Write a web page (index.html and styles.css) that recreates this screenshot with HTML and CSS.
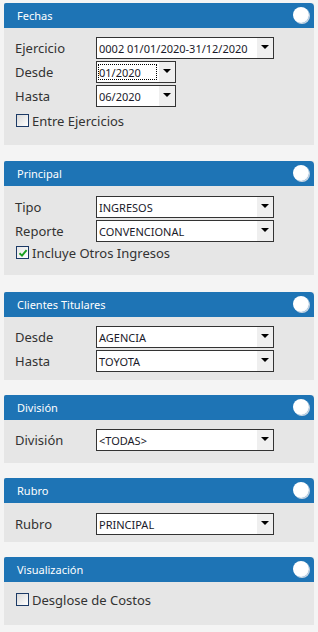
FILE: index.html
```html
<!DOCTYPE html>
<html lang="es">
<head>
<meta charset="utf-8">
<title>Reporte</title>
<link rel="stylesheet" href="styles.css">
</head>
<body>
<div class="panel">
  <div class="panel-head"><span class="title">Fechas</span><span class="knob"></span></div>
  <div class="panel-body pb18">
    <div class="row"><span class="label">Ejercicio</span><div class="select wide"><span class="value">0002 01/01/2020-31/12/2020</span><span class="arrow"></span></div></div>
    <div class="row"><span class="label">Desde</span><div class="select narrow"><span class="value focus">01/2020</span><span class="arrow"></span></div></div>
    <div class="row"><span class="label">Hasta</span><div class="select narrow"><span class="value">06/2020</span><span class="arrow"></span></div></div>
    <label class="check first-check"><span class="box"></span><span>Entre Ejercicios</span></label>
  </div>
</div>

<div class="panel">
  <div class="panel-head"><span class="title">Principal</span><span class="knob"></span></div>
  <div class="panel-body pt10 pb16">
    <div class="row"><span class="label">Tipo</span><div class="select wide"><span class="value">INGRESOS</span><span class="arrow"></span></div></div>
    <div class="row"><span class="label">Reporte</span><div class="select wide"><span class="value">CONVENCIONAL</span><span class="arrow"></span></div></div>
    <label class="check"><span class="box checked"><svg viewBox="0 0 10 10" width="10" height="10"><path d="M1.5 5.2 L4 7.6 L8.6 2.2" fill="none" stroke="#19a01e" stroke-width="1.9"/></svg></span><span>Incluye Otros Ingresos</span></label>
  </div>
</div>

<div class="panel">
  <div class="panel-head"><span class="title">Clientes Titulares</span><span class="knob"></span></div>
  <div class="panel-body">
    <div class="row"><span class="label">Desde</span><div class="select wide"><span class="value">AGENCIA</span><span class="arrow"></span></div></div>
    <div class="row"><span class="label">Hasta</span><div class="select wide"><span class="value">TOYOTA</span><span class="arrow"></span></div></div>
  </div>
</div>

<div class="panel">
  <div class="panel-head"><span class="title">División</span><span class="knob"></span></div>
  <div class="panel-body pb12">
    <div class="row"><span class="label">División</span><div class="select wide"><span class="value">&lt;TODAS&gt;</span><span class="arrow"></span></div></div>
  </div>
</div>

<div class="panel">
  <div class="panel-head"><span class="title">Rubro</span><span class="knob"></span></div>
  <div class="panel-body pt10 pb7">
    <div class="row"><span class="label">Rubro</span><div class="select wide"><span class="value">PRINCIPAL</span><span class="arrow"></span></div></div>
  </div>
</div>

<div class="panel">
  <div class="panel-head"><span class="title">Visualización</span><span class="knob"></span></div>
  <div class="panel-body pb19">
    <label class="check solo"><span class="box"></span><span>Desglose de Costos</span></label>
  </div>
</div>
</body>
</html>
```

FILE: styles.css
```css
html, body {
  margin: 0;
  padding: 0;
  background: #f4f4f4;
}
body {
  padding: 3px 4px 0 4px;
  font-family: "Noto Sans", "Open Sans", sans-serif;
  color: #333;
}
.panel {
  margin-bottom: 15px;
  background: #e6e6e6;
}
.panel:first-child { margin-bottom: 16px; }
.panel:nth-child(2) { margin-bottom: 17px; }
.panel-head {
  height: 25px;
  background: #1e74b5;
  border-radius: 2px 4px 0 0;
  display: flex;
  align-items: center;
  justify-content: space-between;
  padding: 0 5px 0 13px;
  box-sizing: border-box;
}
.title {
  color: #fff;
  font-size: 11px;
}
.knob {
  width: 16px;
  height: 16px;
  border-radius: 50%;
  background: radial-gradient(circle at 40% 40%, #ffffff 60%, #e4ebf2 100%);
  box-shadow: 1px 1px 0 #c9d5e2;
  margin-top: -2px;
}
.panel-body {
  padding: 9px 0 8px 11px;
  display: flex;
  flex-direction: column;
  gap: 2px;
}
.pt10 { padding-top: 10px; }
.pb7 { padding-bottom: 7px; }
.pb12 { padding-bottom: 12px; }
.pb16 { padding-bottom: 16px; }
.pb18 { padding-bottom: 18px; }
.pb19 { padding-bottom: 19px; }
.row {
  display: flex;
  align-items: center;
  height: 22px;
}
.label {
  width: 81px;
  font-size: 13px;
  color: #333;
}
.select {
  height: 22px;
  box-sizing: border-box;
  border: 1px solid #333;
  background: #fff;
  display: flex;
  align-items: stretch;
}
.select.wide { width: 178px; }
.select.narrow { width: 80px; }
.value {
  flex: 1;
  display: flex;
  align-items: center;
  padding-left: 2px;
  font-size: 11px;
  color: #1a1a2a;
  white-space: nowrap;
  overflow: hidden;
}
.value.focus {
  outline: 1px dotted #000;
  outline-offset: -2px;
  margin: 1px 1px 1px 0;
}
.arrow {
  width: 16px;
  background: #efefef;
  position: relative;
}
.arrow::after {
  content: "";
  position: absolute;
  left: 4px;
  top: 7px;
  border-left: 4px solid transparent;
  border-right: 4px solid transparent;
  border-top: 4px solid #000;
}
.check {
  display: flex;
  align-items: center;
  gap: 3px;
  height: 13px;
  margin-top: 2px;
  margin-left: 1px;
  font-size: 13px;
  color: #333;
}
.first-check { margin-top: 5px; }
.check.solo { margin-top: 2px; }
.box {
  width: 11px;
  height: 11px;
  border: 1px solid #1c3a66;
  background: linear-gradient(135deg, #d9d9d9, #ffffff);
  display: flex;
  align-items: center;
  justify-content: center;
}
.box.checked { background: linear-gradient(135deg, #e6e6e6, #ffffff); }
```
